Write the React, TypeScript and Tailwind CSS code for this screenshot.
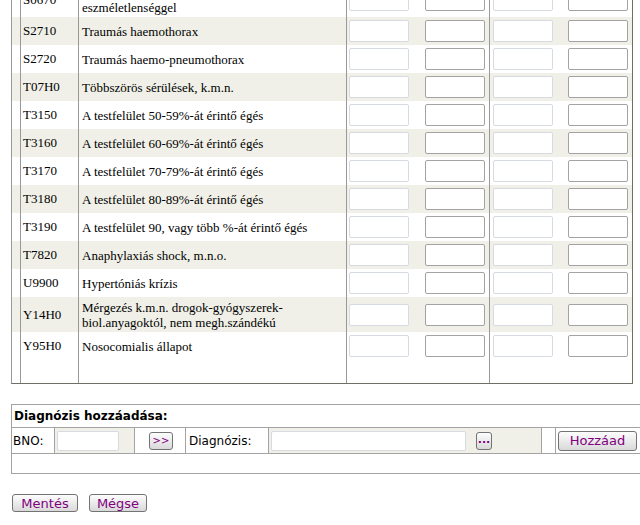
import React from 'react'

const SERIF = "font-['Liberation_Serif',serif]"
const SANS = "font-['DejaVu_Sans',Verdana,sans-serif]"

type Row = { code: string; name: string[]; tall?: boolean }

const ROWS: Row[] = [
  { code: 'S0670', name: ['Koponyaűri sérülés elhúzódó', 'eszméletlenséggel'], tall: true },
  { code: 'S2710', name: ['Traumás haemothorax'] },
  { code: 'S2720', name: ['Traumás haemo-pneumothorax'] },
  { code: 'T07H0', name: ['Többszörös sérülések, k.m.n.'] },
  { code: 'T3150', name: ['A testfelület 50-59%-át érintő égés'] },
  { code: 'T3160', name: ['A testfelület 60-69%-át érintő égés'] },
  { code: 'T3170', name: ['A testfelület 70-79%-át érintő égés'] },
  { code: 'T3180', name: ['A testfelület 80-89%-át érintő égés'] },
  { code: 'T3190', name: ['A testfelület 90, vagy több %-át érintő égés'] },
  { code: 'T7820', name: ['Anaphylaxiás shock, m.n.o.'] },
  { code: 'U9900', name: ['Hypertóniás krízis'] },
  { code: 'Y14H0', name: ['Mérgezés k.m.n. drogok-gyógyszerek-', 'biol.anyagoktól, nem megh.szándékú'], tall: true },
  { code: 'Y95H0', name: ['Nosocomialis állapot'] },
]

function Field({ light }: { light?: boolean }) {
  return (
    <input
      type="text"
      className={`h-[22px] w-[60px] shrink-0 rounded-[2px] border bg-white p-0 outline-none ${
        light ? 'border-[#d6dae3]' : 'border-[#a3a3a3]'
      }`}
    />
  )
}

function Btn({ children, className }: { children: React.ReactNode; className: string }) {
  return (
    <button
      className={`flex shrink-0 items-center justify-center rounded-[3px] border border-[#737373] bg-linear-to-b from-[#fdfdfd] to-[#d9d9d9] leading-none text-[#800080] ${SANS} ${className}`}
    >
      {children}
    </button>
  )
}

export default function App() {
  return (
    <div className="h-[525px] w-[640px] overflow-hidden bg-white text-black">
      <div className={`-mt-[18px] ml-[11px] w-[622px] border-r border-b border-l border-r-[#6e6e64] border-b-[#6e6e64] border-l-[#999] text-[13px] ${SERIF}`}>
        {ROWS.map((r, i) => (
          <div key={r.code} className={`flex ${r.tall ? 'h-[35px]' : 'h-[28px]'} ${i % 2 ? 'bg-[#f0f0e8]' : ''}`}>
            <div className="w-[9px] shrink-0 border-r border-[#999]" />
            <div className="flex w-[58px] shrink-0 items-center border-r border-[#999] pl-[2px]">{r.code}</div>
            <div className="flex w-[268px] shrink-0 flex-col justify-center border-r border-[#999] pl-[3px] leading-[15px]">
              {r.name.map((n) => (
                <span key={n} className="whitespace-nowrap">{n}</span>
              ))}
            </div>
            <div className="flex w-[143px] shrink-0 items-center gap-[16px] border-r border-[#999] pl-[2px]">
              <Field light />
              <Field />
            </div>
            <div className="flex w-[142px] shrink-0 items-center gap-[15px] pl-[3px]">
              <Field light />
              <Field />
            </div>
          </div>
        ))}
        <div className="flex h-[23px]">
          <div className="w-[9px] shrink-0 border-r border-[#999]" />
          <div className="w-[58px] shrink-0 border-r border-[#999]" />
          <div className="w-[268px] shrink-0 border-r border-[#999]" />
          <div className="w-[143px] shrink-0 border-r border-[#999]" />
        </div>
      </div>

      <div className={`mt-[20px] ml-[11px] w-[700px] border-t border-b border-l border-[#a3a3a3] text-[12px] ${SANS}`}>
        <div className="flex h-[23px] items-center border-b border-[#a3a3a3] pl-[2px] font-bold">
          Diagnózis hozzáadása:
        </div>
        <div className="flex h-[26px] border-b border-[#a3a3a3]">
          <div className="flex w-[43px] shrink-0 items-center border-r border-[#a3a3a3] pl-[1px]">BNO:</div>
          <div className="flex w-[80px] shrink-0 items-center border-r border-[#a3a3a3] bg-[#f0f0e8] pl-[2px]">
            <input type="text" className="h-[20px] w-[62px] rounded-[2px] border border-[#d6dae3] bg-white p-0 outline-none" />
          </div>
          <div className="flex w-[51px] shrink-0 items-center border-r border-[#a3a3a3] pl-[14px]">
            <Btn className="h-[18px] w-[24px] text-[10px]">&gt;&gt;</Btn>
          </div>
          <div className="flex w-[83px] shrink-0 items-center border-r border-[#a3a3a3] pl-[3px]">Diagnózis:</div>
          <div className="flex w-[273px] shrink-0 items-center gap-[10px] border-r border-[#a3a3a3] bg-[#f0f0e8] pl-[2px]">
            <input type="text" className="h-[20px] w-[195px] rounded-[2px] border border-[#d6dae3] bg-white p-0 outline-none" />
            <Btn className="h-[18px] w-[16px] pb-[3px] text-[11px] font-bold">...</Btn>
          </div>
          <div className="w-[14px] shrink-0 border-r border-[#a3a3a3]" />
          <div className="flex items-center pl-[2px]">
            <Btn className="h-[20px] w-[79px] text-[13px]">Hozzáad</Btn>
          </div>
        </div>
        <div className="h-[19px]" />
      </div>

      <div className="mt-[20px] ml-[12px] flex gap-[11px]">
        <Btn className="h-[18px] w-[66px] text-[13px]">Mentés</Btn>
        <Btn className="h-[18px] w-[58px] text-[13px]">Mégse</Btn>
      </div>
    </div>
  )
}
